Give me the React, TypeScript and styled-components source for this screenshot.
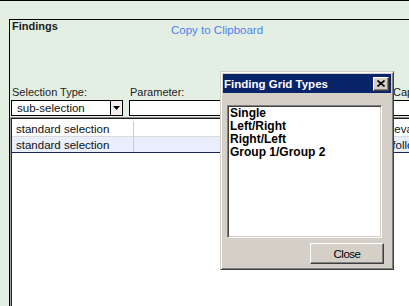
import styled, { createGlobalStyle } from 'styled-components'

const GlobalStyle = createGlobalStyle`
  html, body, #root {
    margin: 0;
    padding: 0;
    height: 100%;
  }
  body {
    background: #e4efe3;
    font-family: "Liberation Sans", Arial, sans-serif;
    overflow: hidden;
  }
`

interface iRow {
  kind: string;
  param: string;
  extra: string;
  selected?: boolean;
}

const rows: iRow[] = [
  { kind: 'standard selection', param: '', extra: 'Relevant' },
  { kind: 'standard selection', param: '', extra: 'To follow', selected: true },
]

const gridTypes = ['Single', 'Left/Right', 'Right/Left', 'Group 1/Group 2']

const App = () => {
  return (
    <>
      <GlobalStyle />
      <Screen>
        <Panel>
          <Header>
            <Title>Findings</Title>
            <CopyLink>Copy to Clipboard</CopyLink>
          </Header>
          <FieldRow>
            <Field $width={112}>
              <Label>Selection Type:</Label>
              <Select>
                <SelectBox>sub-selection</SelectBox>
                <SelectButton>
                  <svg width="7" height="4" viewBox="0 0 7 4">
                    <path d="M0 0H7L3.5 4Z" fill="#000" />
                  </svg>
                </SelectButton>
              </Select>
            </Field>
            <Field $width={261} $gap={6}>
              <Label>Parameter:</Label>
              <TextBox />
            </Field>
            <Field $gap={2} $grow>
              <Label>Caption:</Label>
              <TextBox />
            </Field>
          </FieldRow>
          <Grid>
            <GridBody>
              {rows.map((r, i) => (
                <Row key={i} $selected={r.selected}>
                  <Cell $width={122}>{r.kind}</Cell>
                  <Cell $width={239}>{r.param}</Cell>
                  <Cell $grow>{r.extra}</Cell>
                </Row>
              ))}
            </GridBody>
          </Grid>
        </Panel>

        <Dialog>
          <TitleBar>
            <TitleText>Finding Grid Types</TitleText>
            <XButton>
              <svg width="8" height="7" viewBox="0 0 8 7">
                <path d="M0.5 0.5L7.5 6.5M7.5 0.5L0.5 6.5" stroke="#000" strokeWidth="1.6" />
              </svg>
            </XButton>
          </TitleBar>
          <DialogBody>
            <ListBox>
              {gridTypes.map((t) => (
                <ListItem key={t}>{t}</ListItem>
              ))}
            </ListBox>
            <Footer>
              <PushButton>Close</PushButton>
            </Footer>
          </DialogBody>
        </Dialog>
      </Screen>
    </>
  )
}

export default App

const Screen = styled.div`
width: 409px;
height: 306px;
box-sizing: border-box;
border-top: 1px solid #000;
padding: 18px 0 0 9px;
display: flex;
flex-direction: column;
position: relative;
overflow: hidden;
`
const Panel = styled.div`
flex: 1;
display: flex;
flex-direction: column;
border-top: 1px solid #000;
border-left: 1px solid #000;
min-height: 0;
`
const Header = styled.div`
height: 66px;
display: flex;
align-items: flex-start;
padding-left: 2px;
`
const Title = styled.div`
width: 159px;
font-size: 11px;
line-height: 13px;
font-weight: 700;
color: #1c1c1c;
`
const CopyLink = styled.div`
margin-top: 4px;
font-size: 11.5px;
line-height: 13px;
color: #4d7ff0;
cursor: pointer;
`
const FieldRow = styled.div`
display: flex;
padding-left: 1px;
`
const Field = styled.div<{ $width?: number; $gap?: number; $grow?: boolean }>`
display: flex;
flex-direction: column;
width: ${(p) => (p.$width ? `${p.$width}px` : 'auto')};
margin-left: ${(p) => p.$gap || 0}px;
flex: ${(p) => (p.$grow ? 1 : 'none')};
`
const Label = styled.div`
font-size: 11px;
line-height: 13px;
color: #222;
padding-left: 1px;
margin-bottom: 1px;
white-space: nowrap;
`
const Select = styled.div`
display: flex;
height: 16px;
`
const SelectBox = styled.div`
flex: 1;
box-sizing: border-box;
background: #fff;
border: 1px solid #000;
border-right: none;
font-size: 11.5px;
line-height: 14px;
padding-left: 5px;
color: #111;
`
const SelectButton = styled.div`
width: 13px;
box-sizing: border-box;
background: #f4eeee;
border: 1px solid #000;
display: flex;
align-items: center;
justify-content: center;
`
const TextBox = styled.div`
height: 16px;
box-sizing: border-box;
background: #fff;
border: 1px solid #000;
border-right-color: #bbb;
`
const Grid = styled.div`
flex: 1;
margin-top: 1px;
border-top: 1px solid #8c8c8c;
border-left: 1px solid #9c9c9c;
display: flex;
min-height: 0;
`
const GridBody = styled.div`
flex: 1;
background: #fff;
border-top: 1px solid #1e1e1e;
border-left: 1px solid #2a2a2a;
padding-top: 2px;
`
const Row = styled.div<{ $selected?: boolean }>`
display: flex;
height: 16px;
box-sizing: border-box;
background: ${(p) => (p.$selected ? '#e8eefb' : '#fff')};
border-bottom: 1px solid ${(p) => (p.$selected ? '#1b2456' : '#dadada')};
`
const Cell = styled.div<{ $width?: number; $grow?: boolean }>`
width: ${(p) => (p.$width ? `${p.$width}px` : 'auto')};
flex: ${(p) => (p.$grow ? 1 : 'none')};
box-sizing: border-box;
border-right: 1px solid #cdcdcd;
padding: 1px 0 0 4px;
font-size: 11.5px;
line-height: 14px;
color: #111;
white-space: nowrap;
overflow: hidden;
`
const Dialog = styled.div`
position: absolute;
left: 220px;
top: 70px;
width: 174px;
height: 199px;
box-sizing: border-box;
background: #d4d0c8;
border: 1px solid;
border-color: #d4d0c8 #404040 #404040 #d4d0c8;
box-shadow: inset 1px 1px #fff, inset -1px -1px #808080;
padding: 2px;
display: flex;
flex-direction: column;
`
const TitleBar = styled.div`
height: 19px;
background: #0a246a;
display: flex;
align-items: center;
justify-content: space-between;
padding: 0 2px 0 1px;
`
const TitleText = styled.div`
color: #fff;
font-size: 11.5px;
font-weight: 700;
line-height: 13px;
padding-top: 1px;
white-space: nowrap;
`
const XButton = styled.div`
width: 16px;
height: 14px;
box-sizing: border-box;
background: #d4d0c8;
border: 1px solid;
border-color: #fff #404040 #404040 #fff;
box-shadow: inset -1px -1px #808080;
display: flex;
align-items: center;
justify-content: center;
padding-right: 1px;
`
const DialogBody = styled.div`
flex: 1;
display: flex;
flex-direction: column;
padding: 12px 0 0 4px;
`
const ListBox = styled.div`
height: 133px;
box-sizing: border-box;
margin-right: 9px;
background: #fff;
border: 1px solid;
border-color: #808080 #fff #fff #808080;
box-shadow: inset 1px 1px #404040, inset -1px -1px #d4d0c8;
padding: 1px 0 0 2px;
`
const ListItem = styled.div`
font-size: 12px;
line-height: 13px;
font-weight: 700;
color: #000;
white-space: nowrap;
`
const Footer = styled.div`
display: flex;
justify-content: flex-end;
padding-right: 7px;
margin-top: 5px;
`
const PushButton = styled.div`
width: 74px;
height: 21px;
box-sizing: border-box;
border: 1px solid;
border-color: #fff #404040 #404040 #fff;
box-shadow: inset -1px -1px #808080;
display: flex;
align-items: center;
justify-content: center;
font-size: 11.5px;
letter-spacing: -0.5px;
color: #000;
`
